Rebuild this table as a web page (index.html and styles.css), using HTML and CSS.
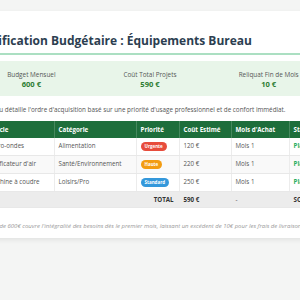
FILE: index.html
```html
<!DOCTYPE html>
<html lang="fr">
<head>
<meta charset="utf-8">
<title>Planification Budgétaire</title>
<link rel="stylesheet" href="styles.css">
</head>
<body>
<div class="card">
  <h1 class="title">Planification Budgétaire : Équipements Bureau</h1>
  <div class="summary">
    <div class="stat"><div class="label">Budget Mensuel</div><div class="value">600 €</div></div>
    <div class="stat"><div class="label">Coût Total Projets</div><div class="value">590 €</div></div>
    <div class="stat"><div class="label">Reliquat Fin de Mois</div><div class="value">10 €</div></div>
  </div>
  <p class="intro">Ce tableau détaille l'ordre d'acquisition basé sur une priorité d'usage professionnel et de confort immédiat.</p>
  <table class="plan">
    <colgroup>
      <col class="w-article"><col class="w-cat"><col class="w-prio"><col class="w-cost"><col class="w-month"><col class="w-status">
    </colgroup>
    <thead>
      <tr><th class="first">Article</th><th>Catégorie</th><th>Priorité</th><th>Coût Estimé</th><th>Mois d'Achat</th><th>Statut</th></tr>
    </thead>
    <tbody>
      <tr><td class="first">Micro-ondes</td><td>Alimentation</td><td><span class="badge urgent">Urgente</span></td><td>120 €</td><td>Mois 1</td><td class="status">Planifié</td></tr>
      <tr><td class="first">Purificateur d'air</td><td>Santé/Environnement</td><td><span class="badge high">Haute</span></td><td>220 €</td><td>Mois 1</td><td class="status">Planifié</td></tr>
      <tr><td class="first">Machine à coudre</td><td>Loisirs/Pro</td><td><span class="badge std">Standard</span></td><td>250 €</td><td>Mois 1</td><td class="status">Planifié</td></tr>
      <tr class="total"><td colspan="3" class="total-label">TOTAL</td><td>590 €</td><td class="dash">-</td><td>SOLDE : 10 €</td></tr>
    </tbody>
  </table>
  <p class="note">Le budget de 600€ couvre l'intégralité des besoins dès le premier mois, laissant un excédent de 10€ pour les frais de livraison ou accessoires.</p>
</div>
</body>
</html>
```
FILE: styles.css
```css
html, body {
  margin: 0;
  padding: 0;
}
body {
  background: #f4f5f4;
  font-family: "Open Sans", "Liberation Sans", sans-serif;
  display: flex;
  justify-content: center;
  align-items: flex-start;
  padding-top: 11px;
  height: 289px;
  overflow: hidden;
}
.card {
  flex: 0 0 400px;
  width: 400px;
  box-sizing: border-box;
  background: #fff;
  padding: 22px 22px 7px;
  box-shadow: 0 2px 5px rgba(0, 0, 0, 0.08);
}
.title {
  margin: 0;
  font-size: 12px;
  line-height: 16px;
  font-weight: 700;
  color: #2c3e50;
  padding-bottom: 4px;
  border-bottom: 2px solid #abdfc2;
  white-space: nowrap;
}
.summary {
  margin-top: 6px;
  background: #e8f5e9;
  border-radius: 3px;
  display: grid;
  grid-template-columns: 1fr 1fr 1fr;
  padding: 8.5px 0 7px;
  text-align: center;
}
.label {
  font-size: 6.4px;
  line-height: 9px;
  color: #555;
}
.value {
  font-size: 7.6px;
  line-height: 10px;
  font-weight: 700;
  color: #2e7d32;
}
.intro {
  margin: 9.5px 0 5.5px;
  font-size: 6.3px;
  line-height: 10px;
  color: #555;
  white-space: nowrap;
}
.plan {
  width: 100%;
  table-layout: fixed;
  border-collapse: collapse;
  font-size: 6.2px;
}
.w-article { width: 82px; }
.w-cat { width: 82px; }
.w-prio { width: 43px; }
.w-cost { width: 52px; }
.w-month { width: 58px; }
.w-status { width: 39px; }
.plan th {
  background: #1e6e3b;
  color: #fff;
  font-weight: 700;
  text-align: left;
  padding: 4px;
  line-height: 9px;
  border-right: 1px solid rgba(255, 255, 255, 0.18);
  white-space: nowrap;
}
.plan td {
  padding: 4px;
  line-height: 7.6px;
  color: #555;
  border-bottom: 1px solid #e8e8e8;
  border-right: 1px solid #ececec;
  white-space: nowrap;
  overflow: hidden;
}
.plan .first {
  padding-left: 16px;
}
.plan tbody tr:nth-child(2) td {
  background: #f9f9f9;
}
.badge {
  display: inline-block;
  color: #fff;
  font-weight: 700;
  font-size: 4.5px;
  line-height: 9px;
  padding: 0 4px;
  border-radius: 5px;
  vertical-align: middle;
}
.urgent { background: #e74c3c; }
.high { background: #f39c12; }
.std { background: #3498db; }
.plan td.status {
  color: #27ae60;
  font-weight: 700;
}
.plan tr.total td {
  background: #ececec;
  color: #333;
  font-weight: 700;
}
.plan tr.total td.total-label {
  text-align: right;
  padding-right: 5px;
}
.plan tr.total td.dash {
  font-weight: 400;
  color: #555;
}
.note {
  margin: 14px 0 0;
  font-size: 6px;
  line-height: 9px;
  font-style: italic;
  color: #999;
  text-align: center;
  white-space: nowrap;
}
```
